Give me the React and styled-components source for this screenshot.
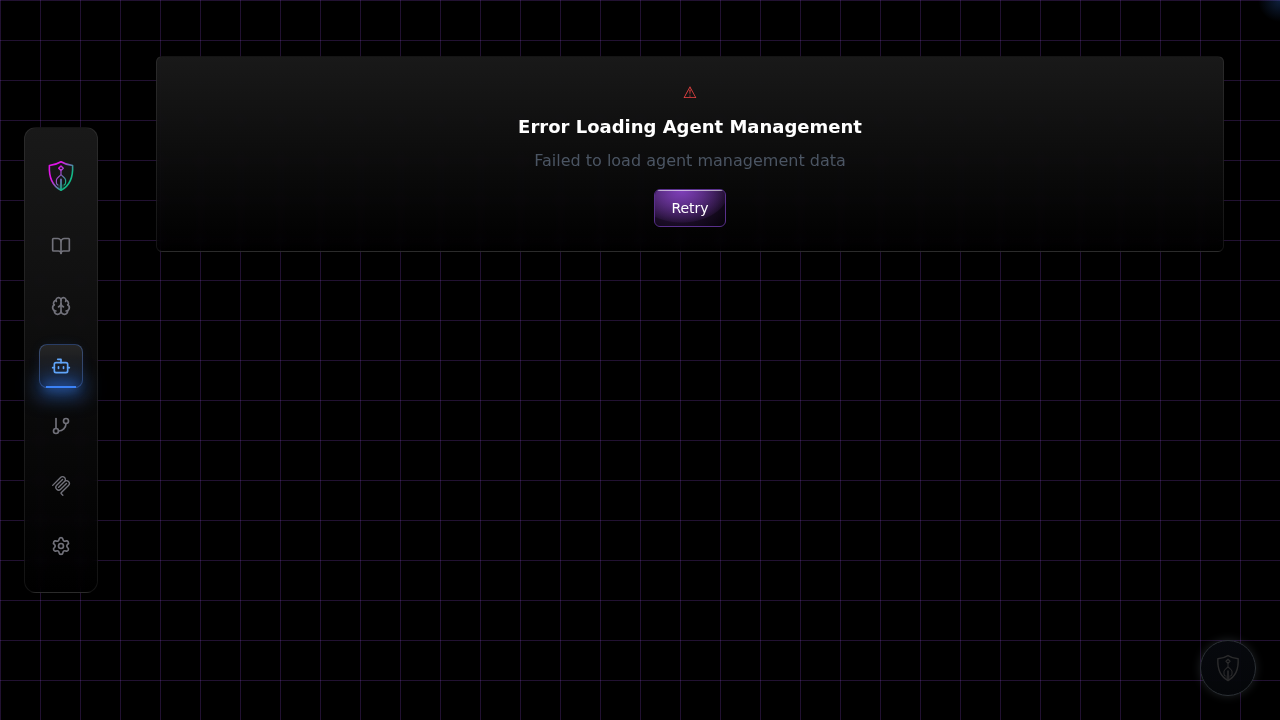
import React from "react";
import styled, { createGlobalStyle } from "styled-components";
import { BookOpen, Brain, Bot, GitBranch, Settings } from "lucide-react";

const GlobalStyle = createGlobalStyle`
  *, *::before, *::after { box-sizing: border-box; }
  body {
    margin: 0;
    background: #000;
    color: #fff;
    font-family: "DejaVu Sans", sans-serif;
    font-size: 16px;
    line-height: 24px;
  }
`;

const Page = styled.div`
  display: flex;
  align-items: flex-start;
  min-height: 100vh;
  background-color: #000;
  background-image:
    radial-gradient(circle at 100% 0, rgba(59, 130, 246, 0.25) 0, transparent 22px),
    linear-gradient(rgba(168, 85, 247, 0.2) 1px, transparent 1px),
    linear-gradient(90deg, rgba(168, 85, 247, 0.2) 1px, transparent 1px);
  background-size: 100% 100%, 40px 40px, 40px 40px;
  background-repeat: no-repeat, repeat, repeat;
`;

const Sidebar = styled.aside`
  position: sticky;
  top: 0;
  flex: none;
  display: flex;
  align-items: center;
  height: 100vh;
  padding: 0 24px;
`;

const NavPanel = styled.nav`
  display: flex;
  flex-direction: column;
  align-items: center;
  gap: 24px;
  padding: 24px 14px;
  border: 1px solid rgba(255, 255, 255, 0.08);
  border-radius: 12px;
  background: linear-gradient(rgba(27, 27, 27, 0.92), rgba(0, 0, 0, 0.6));
  backdrop-filter: blur(4px);
`;

const LogoLink = styled.a`
  display: flex;
  align-items: center;
  justify-content: center;
  height: 48px;
`;

const NavList = styled.div`
  display: flex;
  flex-direction: column;
  gap: 16px;
`;

const NavLink = styled.a`
  position: relative;
  display: flex;
  align-items: center;
  justify-content: center;
  width: 44px;
  height: 44px;
  border: 1px solid ${(p) => (p.$active ? "rgba(96, 150, 246, 0.35)" : "transparent")};
  border-radius: 8px;
  color: ${(p) => (p.$active ? "#60a5fa" : "#71717a")};
  background: ${(p) => (p.$active ? "linear-gradient(#262626, #0b0f18)" : "none")};
  box-shadow: ${(p) => (p.$active ? "0 0 15px -5px rgba(59, 130, 246, 0.2)" : "none")};

  &::after {
    content: "";
    display: ${(p) => (p.$active ? "block" : "none")};
    position: absolute;
    left: 6px;
    right: 6px;
    bottom: -1px;
    height: 2px;
    background: #3b82f6;
    box-shadow: 0 0 10px 2px rgba(59, 130, 246, 0.3), 0 0 20px 7px rgba(59, 130, 246, 0.6);
  }

  & > svg {
    position: relative;
    z-index: 1;
  }
`;

const Main = styled.main`
  flex: 1;
  min-width: 0;
  padding: 56px 56px 56px 34px;
`;

const ErrorCard = styled.section`
  display: flex;
  flex-direction: column;
  align-items: center;
  gap: 8px;
  padding: 24px;
  border: 1px solid rgba(255, 255, 255, 0.08);
  border-radius: 6px;
  background: linear-gradient(rgba(27, 27, 27, 0.92), rgba(0, 0, 0, 0.6));
  backdrop-filter: blur(4px);
  text-align: center;
`;

const WarningGlyph = styled.div`
  color: #ef4444;
`;

const Title = styled.h1`
  margin: 0;
  font-size: 18px;
  line-height: 28px;
  font-weight: 700;
`;

const Message = styled.p`
  margin: 0 0 8px;
  color: #4b5563;
`;

const RetryButton = styled.button`
  position: relative;
  overflow: hidden;
  padding: 8px 16px;
  border: 1px solid #59308c;
  border-radius: 6px;
  color: #fff;
  font: inherit;
  font-size: 14px;
  line-height: 20px;
  background:
    radial-gradient(ellipse 48px 33px at 38% 0, #8040bb 0, rgba(123, 61, 179, 0.65) 45%, rgba(123, 61, 179, 0.25) 85%, rgba(123, 61, 179, 0.12) 97%, transparent 100%) padding-box,
    radial-gradient(ellipse 60px 44px at 30% 20%, rgba(123, 61, 179, 0.4), transparent) padding-box,
    #07030b;
  cursor: pointer;

  &::before {
    content: "";
    position: absolute;
    inset: 0 2px auto;
    height: 1px;
    background: rgba(255, 255, 255, 0.6);
  }
`;

const ChatButton = styled.button`
  position: fixed;
  right: 24px;
  bottom: 24px;
  display: flex;
  align-items: center;
  justify-content: center;
  width: 56px;
  height: 56px;
  padding: 0;
  border: 1px solid #2c3136;
  border-radius: 50%;
  background: linear-gradient(rgba(7, 9, 14, 0.95), rgba(5, 7, 10, 0.95));
  box-shadow: 0 0 10px rgba(120, 130, 145, 0.25);
`;

function ShieldLogo({ size, muted }) {
  const stroke = muted ? "#2b2b2c" : "url(#shield-gradient)";
  return (
    <svg width={size} height={size} viewBox="0 0 32 32" fill="none" stroke={stroke} strokeWidth="1.6" strokeLinejoin="round" strokeLinecap="round" aria-hidden="true">
      <defs>
        <linearGradient id="shield-gradient" gradientUnits="userSpaceOnUse" x1="8" y1="8" x2="24" y2="18">
          <stop offset="0.25" stopColor="#e015e8" />
          <stop offset="1" stopColor="#12b886" />
        </linearGradient>
      </defs>
      <path d="M16 1.8C12.5 4 8.5 5 4.4 5.5C3.8 17 6.6 25.5 16 30.3C25.4 25.5 28.2 17 27.6 5.5C23.5 5 19.5 4 16 1.8Z" />
      <path d="M16 6L18.3 8.3L16 10.6L13.7 8.3Z" strokeWidth="1.4" />
      <path d="M16 10.8V14.3C15.5 16 11.4 17.5 11.4 20V22.5C11.4 23.8 12 24.5 12.8 25M16 14.3C16.5 16 20.6 17.5 20.6 20V22.5C20.6 23.8 20 24.5 19.2 25" strokeWidth="1.2" />
      <path d="M16 19.5V29.5" strokeWidth="1.8" />
      <path d="M14 25V28.2M18 25V28.2" strokeWidth="0.5" />
    </svg>
  );
}

function McpIcon({ size = 20 }) {
  return (
    <svg width={size} height={size} viewBox="0 0 24 24" fill="currentColor" aria-hidden="true">
      <path d="M13.85 0a4.16 4.16 0 0 0-2.95 1.217L1.456 10.66a.835.835 0 0 0 0 1.18.835.835 0 0 0 1.18 0l9.442-9.442a2.49 2.49 0 0 1 3.541 0 2.49 2.49 0 0 1 0 3.541L8.59 12.97l-.1.1a.835.835 0 0 0 0 1.18.835.835 0 0 0 1.18 0l.1-.098 7.03-7.034a2.49 2.49 0 0 1 3.542 0l.049.05a2.49 2.49 0 0 1 0 3.54l-8.54 8.54a1.96 1.96 0 0 0 0 2.755l1.753 1.753a.835.835 0 0 0 1.18 0 .835.835 0 0 0 0-1.18l-1.753-1.753a.266.266 0 0 1 0-.394l8.54-8.54a4.185 4.185 0 0 0 0-5.9l-.05-.05a4.16 4.16 0 0 0-2.95-1.218c-.2 0-.401.02-.6.048a4.17 4.17 0 0 0-1.17-3.552A4.16 4.16 0 0 0 13.85 0m0 3.333a.84.84 0 0 0-.59.245L6.275 10.56a4.186 4.186 0 0 0 0 5.902 4.186 4.186 0 0 0 5.902 0L19.16 9.48a.835.835 0 0 0 0-1.18.835.835 0 0 0-1.18 0l-6.985 6.984a2.49 2.49 0 0 1-3.54 0 2.49 2.49 0 0 1 0-3.54l6.983-6.985a.835.835 0 0 0 0-1.18.84.84 0 0 0-.59-.245" />
    </svg>
  );
}

const navItems = [
  { label: "Knowledge Base", Icon: BookOpen },
  { label: "Intelligence", Icon: Brain },
  { label: "Agents", Icon: Bot, active: true },
  { label: "Workflows", Icon: GitBranch },
  { label: "MCP Server", Icon: McpIcon },
  { label: "Settings", Icon: Settings },
];

export default function App() {
  return (
    <>
      <GlobalStyle />
      <Page>
        <Sidebar>
          <NavPanel aria-label="Main">
            <LogoLink href="#" aria-label="Home">
              <ShieldLogo size={32} />
            </LogoLink>
            <NavList>
              {navItems.map(({ label, Icon, active }) => (
                <NavLink key={label} href="#" aria-label={label} aria-current={active ? "page" : undefined} $active={active}>
                  <Icon size={20} />
                </NavLink>
              ))}
            </NavList>
          </NavPanel>
        </Sidebar>
        <Main>
          <ErrorCard role="alert">
            <WarningGlyph aria-hidden="true">⚠</WarningGlyph>
            <Title>Error Loading Agent Management</Title>
            <Message>Failed to load agent management data</Message>
            <RetryButton type="button">Retry</RetryButton>
          </ErrorCard>
        </Main>
        <ChatButton type="button" aria-label="Open assistant">
          <ShieldLogo size={28} muted />
        </ChatButton>
      </Page>
    </>
  );
}
